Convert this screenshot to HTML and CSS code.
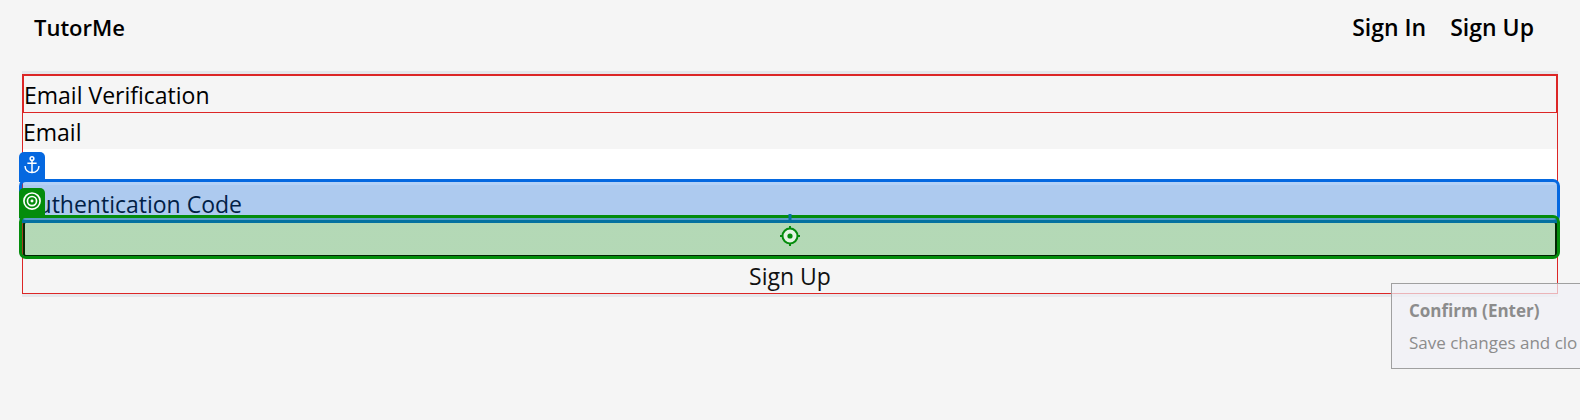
FILE: index.html
```html
<!DOCTYPE html>
<html lang="en">
<head>
<meta charset="utf-8">
<title>TutorMe</title>
<link rel="stylesheet" href="styles.css">
</head>
<body>
<header class="header">
  <a class="brand" href="#">TutorMe</a>
  <nav class="nav"><a href="#">Sign In</a><a href="#">Sign Up</a></nav>
</header>
<main class="panel">
  <form class="form">
    <h1 class="title">Email Verification</h1>
    <label class="label" for="email">Email</label>
    <input class="input" id="email" type="email">
    <div class="target">
      <label class="label" for="code">Authentication Code</label>
      <div class="highlight anchor">
        <span class="badge">
          <svg viewBox="0 0 28 28" fill="none" stroke="#fff" stroke-width="1.6"><circle cx="14" cy="6" r="2"/><path d="M14 8v13M9 11h10M6.500 14c.3 4.800 3.300 7 7.500 7s7.200-2.200 7.500-7"/></svg>
        </span>
      </div>
    </div>
    <div class="target">
      <input class="input code" id="code" type="text">
      <div class="highlight bullseye">
        <span class="badge">
          <svg viewBox="0 0 28 28" fill="none" stroke="#fff" stroke-width="1.800"><circle cx="14" cy="13" r="8.700"/><circle cx="14" cy="13" r="4.900"/><circle cx="14" cy="13" r="1.600" fill="#fff" stroke="none"/></svg>
        </span>
        <svg class="crosshair" viewBox="0 0 22 34" fill="none" stroke="#048c0c" stroke-width="2"><path d="M11 0v9" stroke="#0571a0" stroke-width="3"/><circle cx="11" cy="22" r="7.500" fill="#e3f4e3"/><path d="M11 12v3M11 29v3M1 22h3M18 22h3"/><circle cx="11" cy="22" r="2.600" fill="#048c0c" stroke="none"/></svg>
      </div>
    </div>
    <button class="submit" type="button">Sign Up</button>
  </form>
</main>
<aside class="tooltip">
  <strong>Confirm (Enter)</strong>
  <span>Save changes and clo</span>
</aside>
</body>
</html>
```
FILE: styles.css
```css
* { box-sizing: border-box; }
body {
  position: relative;
  min-height: 100vh;
  margin: 0;
  overflow: hidden;
  background: #f5f5f5;
  color: #000;
  font: 23px/36px "Segoe UI", "Open Sans", "Noto Sans", sans-serif;
}
.header {
  display: flex;
  justify-content: space-between;
  padding: 9px 46px 26px 34px;
  font-weight: 600;
}
.header a { color: inherit; text-decoration: none; }
.brand { font-size: 22px; }
.nav { display: flex; gap: 24px; }
.panel {
  margin: 0 22px;
  border: solid #e5e7eb;
  border-width: 3px 0;
}
.form {
  display: flex;
  flex-direction: column;
  border: 1px solid #dc2626;
}
.title {
  margin: 0;
  padding-top: 2px;
  border: 1px solid #dc2626;
  font-size: 23px;
  font-weight: 400;
  line-height: 34px;
}
.label {
  display: block;
  padding-top: 2px;
  line-height: 34px;
}
.input {
  display: block;
  width: 100%;
  height: 36px;
  padding: 0;
  border: 0;
  background: #fff;
  font: inherit;
}
.code {
  border: 2px solid #000;
  border-radius: 3px;
  outline: 0;
  background: #f5f5f5;
}
.target { position: relative; }
.highlight {
  position: absolute;
  inset: -6px -3px -2px -4px;
  border: 3px solid;
  border-radius: 7px;
  pointer-events: none;
}
.anchor {
  border-color: #0568e0;
  background: rgba(5, 104, 224, 0.3);
}
.bullseye {
  border-color: #048c0c;
  background: linear-gradient(rgba(5, 113, 160, 0.5) 2px, #0571a0 2px, #0571a0 5px, rgba(4, 140, 12, 0.27) 5px) padding-box;
}
.badge {
  position: absolute;
  left: -3px;
  bottom: 100%;
  width: 26px;
  height: 30px;
  border-radius: 5px 5px 0 0;
}
.badge svg { display: block; width: 26px; height: 28px; }
.anchor .badge { background: #0568e0; }
.bullseye .badge { background: #048c0c; }
.crosshair {
  position: absolute;
  left: calc(50% - 11px);
  top: -4px;
  width: 22px;
  height: 34px;
}
.submit {
  height: 36px;
  padding: 2px 0 0;
  border: 0;
  background: transparent;
  color: #111;
  font: inherit;
  line-height: 34px;
}
.tooltip {
  position: absolute;
  top: 283px;
  right: 0;
  display: flex;
  flex-direction: column;
  width: 189px;
  padding: 11px 0 9px 17px;
  border: 1px solid #a0a0a0;
  border-right: 0;
  background: rgba(241, 241, 247, 0.7);
  color: #8c8c8c;
  font-size: 17px;
  line-height: 32px;
  white-space: nowrap;
}
```
